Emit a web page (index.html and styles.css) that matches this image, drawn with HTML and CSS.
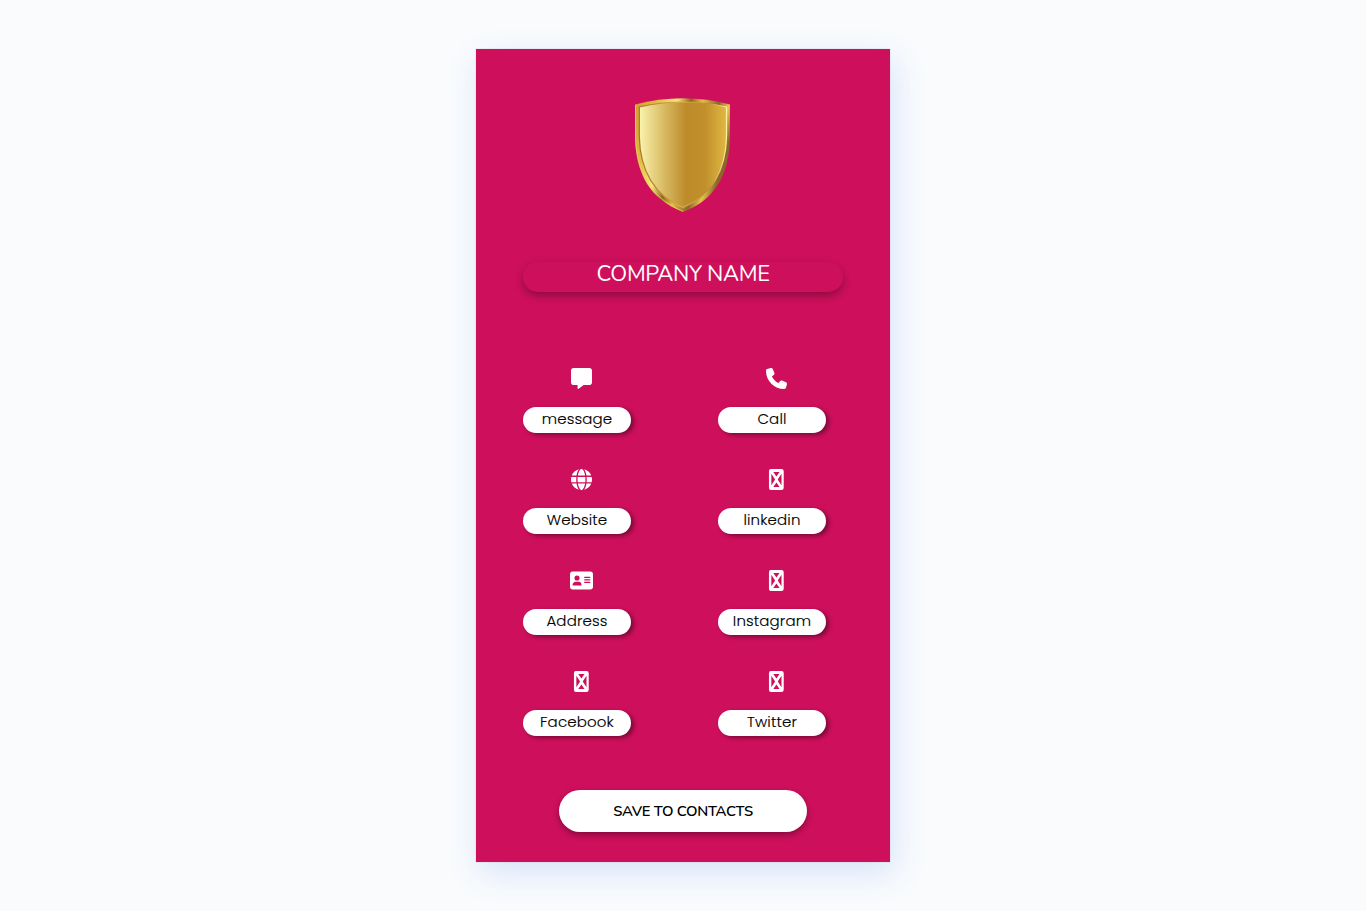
FILE: index.html
```
<!DOCTYPE html>
<html lang="en">
<head>
<meta charset="utf-8">
<title>Company Name</title>
<link rel="stylesheet" href="styles.css">
</head>
<body>
<svg class="defs" aria-hidden="true">
  <symbol id="message" viewBox="0 0 512 512"><path d="M64 0C28.7 0 0 28.7 0 64V352c0 35.3 28.7 64 64 64h96v80c0 6.1 3.4 11.6 8.8 14.3s11.9 2.1 16.8-1.5L309.3 416H448c35.3 0 64-28.7 64-64V64c0-35.3-28.7-64-64-64H64z"/></symbol>
  <symbol id="phone" viewBox="0 0 512 512"><path d="M164.9 24.6c-7.7-18.6-28-28.5-47.4-23.2l-88 24C12.1 30.2 0 46 0 64C0 311.4 200.6 512 448 512c18 0 33.8-12.1 38.6-29.5l24-88c5.3-19.4-4.6-39.7-23.2-47.4l-96-40c-16.3-6.8-35.2-2.1-46.3 11.6L304.7 368C234.3 334.7 177.3 277.7 144 207.3L193.3 167c13.7-11.2 18.4-30 11.6-46.3l-40-96z"/></symbol>
  <symbol id="globe" viewBox="0 0 512 512"><path d="M352 256c0 22.2-1.2 43.6-3.3 64H163.3c-2.2-20.4-3.3-41.8-3.3-64s1.2-43.6 3.3-64H348.7c2.2 20.4 3.3 41.8 3.3 64zm28.8-64H503.9c5.3 20.5 8.1 41.9 8.1 64s-2.8 43.5-8.1 64H380.8c2.1-20.6 3.2-42 3.2-64s-1.1-43.4-3.2-64zm112.6-32H376.7c-10-63.9-29.8-117.4-55.3-151.6c78.3 20.7 142 77.5 171.9 151.6zm-149.1 0H167.7c6.1-36.4 15.5-68.6 27-94.7c10.5-23.6 22.2-40.7 33.5-51.5C239.4 3.2 248.7 0 256 0s16.6 3.2 27.8 13.8c11.3 10.8 23 27.9 33.5 51.5c11.6 26 20.9 58.2 27 94.7zm-209 0H18.6C48.6 85.9 112.2 29.1 190.6 8.4C165.1 42.6 145.3 96.1 135.3 160zM8.1 192H131.2c-2.1 20.6-3.2 42-3.2 64s1.1 43.4 3.2 64H8.1C2.8 299.5 0 278.1 0 256s2.8-43.5 8.1-64zM194.7 446.6c-11.6-26-20.9-58.2-27-94.6H344.3c-6.1 36.4-15.5 68.6-27 94.6c-10.5 23.6-22.2 40.7-33.5 51.5C272.6 508.8 263.3 512 256 512s-16.6-3.2-27.8-13.8c-11.3-10.8-23-27.9-33.5-51.5zM135.3 352c10 63.9 29.8 117.4 55.3 151.6C112.2 482.9 48.6 426.1 18.6 352H135.3zm358.1 0c-30 74.1-93.6 130.9-171.9 151.6c25.5-34.2 45.2-87.7 55.3-151.6H493.4z"/></symbol>
  <symbol id="address" viewBox="0 0 576 512"><path fill-rule="evenodd" d="M64 32C28.700 32 0 60.700 0 96V416c0 35.300 28.700 64 64 64H512c35.300 0 64-28.700 64-64V96c0-35.300-28.700-64-64-64H64zM144 288h80c44.200 0 64 35.800 64 80c0 8.800-7.200 16-16 16H80c-8.800 0-16-7.200-16-16c0-44.200 35.800-80 80-80zM112 192a64 64 0 1 1 128 0a64 64 0 1 1-128 0zM368 160H496a16 16 0 0 1 0 32H368a16 16 0 0 1 0-32zM368 224H496a16 16 0 0 1 0 32H368a16 16 0 0 1 0-32zM368 288H496a16 16 0 0 1 0 32H368a16 16 0 0 1 0-32z"/></symbol>
  <symbol id="glyph" viewBox="0 0 384 512"><path fill-rule="evenodd" d="M56 0h256q56 0 56 56v400q0 56-56 56H56q-48 0-48-56V56Q8 0 56 0zM114 72L190 182L266 72zM66 116V396L158 256zM314 116L222 256L314 396zM190 330L114 440H266z"/></symbol>
</svg>
<main class="card">
  <svg class="shield" viewBox="0 0 96 114" role="img" aria-label="Shield">
    <defs>
      <linearGradient id="face"><stop offset="0" stop-color="#fbf3ad"/><stop offset=".12" stop-color="#ebdb8e"/><stop offset=".3" stop-color="#d6b75f"/><stop offset=".54" stop-color="#bd8b29"/><stop offset=".75" stop-color="#c18f2b"/><stop offset="1" stop-color="#e0b843"/></linearGradient>
      <linearGradient id="rim" x1="0" y1="0" x2="1" y2=".35"><stop offset="0" stop-color="#d19c2c"/><stop offset=".22" stop-color="#e3bb47"/><stop offset=".4" stop-color="#fae77a"/><stop offset=".53" stop-color="#906421"/><stop offset=".64" stop-color="#e2bd49"/><stop offset=".8" stop-color="#8c6628"/><stop offset=".9" stop-color="#e8c44e"/><stop offset="1" stop-color="#8d6729"/></linearGradient>
      <linearGradient id="bevel"><stop offset="0" stop-color="#a17329"/><stop offset=".5" stop-color="#d9b04a"/><stop offset=".8" stop-color="#b98c33"/><stop offset="1" stop-color="#fff1a0"/></linearGradient>
    </defs>
    <path fill="url(#rim)" d="M0 6.500Q48-6 95 6.500V37C95 76 80 102 48 114C16 102 0 76 0 37z"/>
    <path fill="none" stroke="#efcf57" stroke-width=".8" d="M.5 7V37C1 75 17 101 48 113.300"/>
    <path fill="url(#face)" stroke="url(#bevel)" stroke-width="1.200" d="M4.300 9Q48-1 91.500 9V38C91 73 76 98 48 109.500C20 98 4.800 73 4.300 38z"/>
  </svg>
  <h1 class="company">COMPANY NAME</h1>
  <section class="links">
    <a class="link"><svg class="icon"><use href="#message"/></svg><span class="pill">message</span></a>
    <a class="link"><svg class="icon"><use href="#phone"/></svg><span class="pill">Call</span></a>
    <a class="link"><svg class="icon"><use href="#globe"/></svg><span class="pill">Website</span></a>
    <a class="link"><svg class="icon"><use href="#glyph"/></svg><span class="pill">linkedin</span></a>
    <a class="link"><svg class="icon"><use href="#address"/></svg><span class="pill">Address</span></a>
    <a class="link"><svg class="icon"><use href="#glyph"/></svg><span class="pill">Instagram</span></a>
    <a class="link"><svg class="icon"><use href="#glyph"/></svg><span class="pill">Facebook</span></a>
    <a class="link"><svg class="icon"><use href="#glyph"/></svg><span class="pill">Twitter</span></a>
  </section>
  <button class="save">SAVE TO CONTACTS</button>
</main>
</body>
</html>
```
FILE: styles.css
```
* { box-sizing: border-box; }
body {
  margin: 0;
  min-height: 911px;
  padding-top: 49px;
  background: #f9fbfd;
  font-family: Poppins, Inter, sans-serif;
}
.defs { display: none; }
.card {
  width: 414px;
  height: 813px;
  margin: 0 auto;
  padding-top: 49px;
  display: flex;
  flex-direction: column;
  align-items: center;
  background: #ce0f5c;
  box-shadow: 0 0 1px rgba(0, 0, 0, .25), 4px 11px 30px rgba(60, 115, 230, .17);
}
.shield { display: block; width: 96px; height: 114px; }
.company {
  width: 320px;
  height: 30px;
  margin: 50px 0 0;
  border-radius: 15px;
  box-shadow: 0 4px 8px rgba(0, 0, 0, .3);
  color: #fff;
  font: 450 22px/24px Nunito, Lato, sans-serif;
  letter-spacing: -.35px;
  text-align: center;
}
.links {
  align-self: stretch;
  display: grid;
  grid-template-columns: 108px 108px;
  grid-auto-rows: 65px;
  column-gap: 87px;
  row-gap: 36px;
  margin: 76px 0 0 47px;
}
.link { display: flex; flex-direction: column; justify-content: space-between; }
.icon { width: 23px; height: 21px; margin-left: 47px; fill: #fff; }
.pill {
  height: 26px;
  border-radius: 13px;
  background: #fff;
  box-shadow: 3px 2px 4px rgba(0, 0, 0, .4);
  color: #000;
  font-size: 15px;
  font-weight: 300;
  line-height: 24px;
  letter-spacing: .15px;
  text-align: center;
  -webkit-text-stroke: .15px #000;
}
.save {
  width: 248px;
  height: 42px;
  margin: 54px 0 0;
  padding: 0;
  border: 0;
  border-radius: 21px;
  background: #fff;
  box-shadow: 0 3px 6px rgba(0, 0, 0, .35);
  color: #000;
  font: 600 14.800px/42px Nunito, Lato, sans-serif;
  letter-spacing: -.3px;
}
```
